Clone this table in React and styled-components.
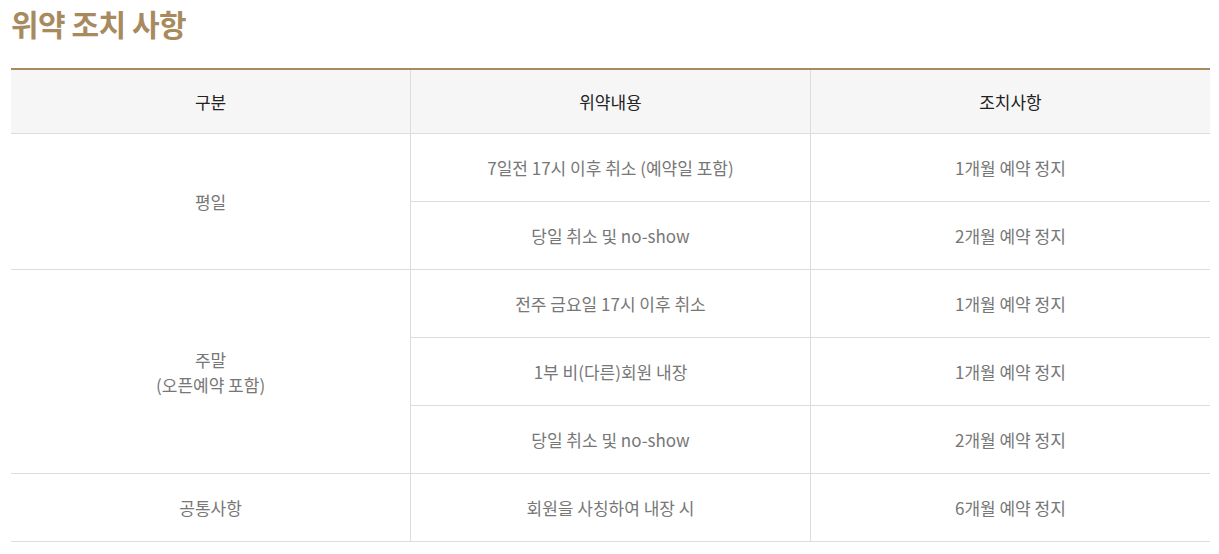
import React from "react";
import styled, { createGlobalStyle } from "styled-components";

const GlobalStyle = createGlobalStyle`
  html, body {
    margin: 0;
    padding: 0;
    background: #fff;
    font-family: "Noto Sans CJK KR", "Noto Sans", sans-serif;
  }
`;

const Wrapper = styled.div`
  padding: 2px 9px 0 11px;
`;

const Title = styled.h2`
  margin: 0;
  font-size: 30px;
  font-weight: 700;
  line-height: 42px;
  color: #a88a5f;
  letter-spacing: -0.5px;
`;

const Table = styled.table`
  width: 100%;
  margin-top: 24px;
  border-collapse: collapse;
  table-layout: fixed;
  border-top: 2px solid #a88a5f;
`;

const Th = styled.th`
  height: 63px;
  padding: 0;
  background: #f6f6f6;
  font-size: 17px;
  font-weight: 400;
  color: #222;
  border-bottom: 1px solid #dcdcdc;
  border-left: 1px solid #dcdcdc;
  &:first-child {
    border-left: 0;
  }
`;

const Td = styled.td`
  height: 67px;
  padding: 0;
  text-align: center;
  font-size: 17px;
  line-height: 25px;
  color: #777;
  border-bottom: 1px solid #dcdcdc;
  border-left: ${(p) => (p.first ? "0" : "1px solid #dcdcdc")};
`;

const groups = [
  {
    label: ["평일"],
    rows: [
      ["7일전 17시 이후 취소 (예약일 포함)", "1개월 예약 정지"],
      ["당일 취소 및 no-show", "2개월 예약 정지"],
    ],
  },
  {
    label: ["주말", "(오픈예약 포함)"],
    rows: [
      ["전주 금요일 17시 이후 취소", "1개월 예약 정지"],
      ["1부 비(다른)회원 내장", "1개월 예약 정지"],
      ["당일 취소 및 no-show", "2개월 예약 정지"],
    ],
  },
  {
    label: ["공통사항"],
    rows: [["회원을 사칭하여 내장 시", "6개월 예약 정지"]],
  },
];

const App = () => (
  <Wrapper>
    <GlobalStyle />
    <Title>위약 조치 사항</Title>
    <Table>
      <thead>
        <tr>
          <Th>구분</Th>
          <Th>위약내용</Th>
          <Th>조치사항</Th>
        </tr>
      </thead>
      <tbody>
        {groups.map((g, gi) =>
          g.rows.map((r, ri) => (
            <tr key={`${gi}-${ri}`}>
              {ri === 0 && (
                <Td first rowSpan={g.rows.length}>
                  {g.label.map((l, li) => (
                    <div key={li}>{l}</div>
                  ))}
                </Td>
              )}
              <Td>{r[0]}</Td>
              <Td>{r[1]}</Td>
            </tr>
          ))
        )}
      </tbody>
    </Table>
  </Wrapper>
);

export default App;
